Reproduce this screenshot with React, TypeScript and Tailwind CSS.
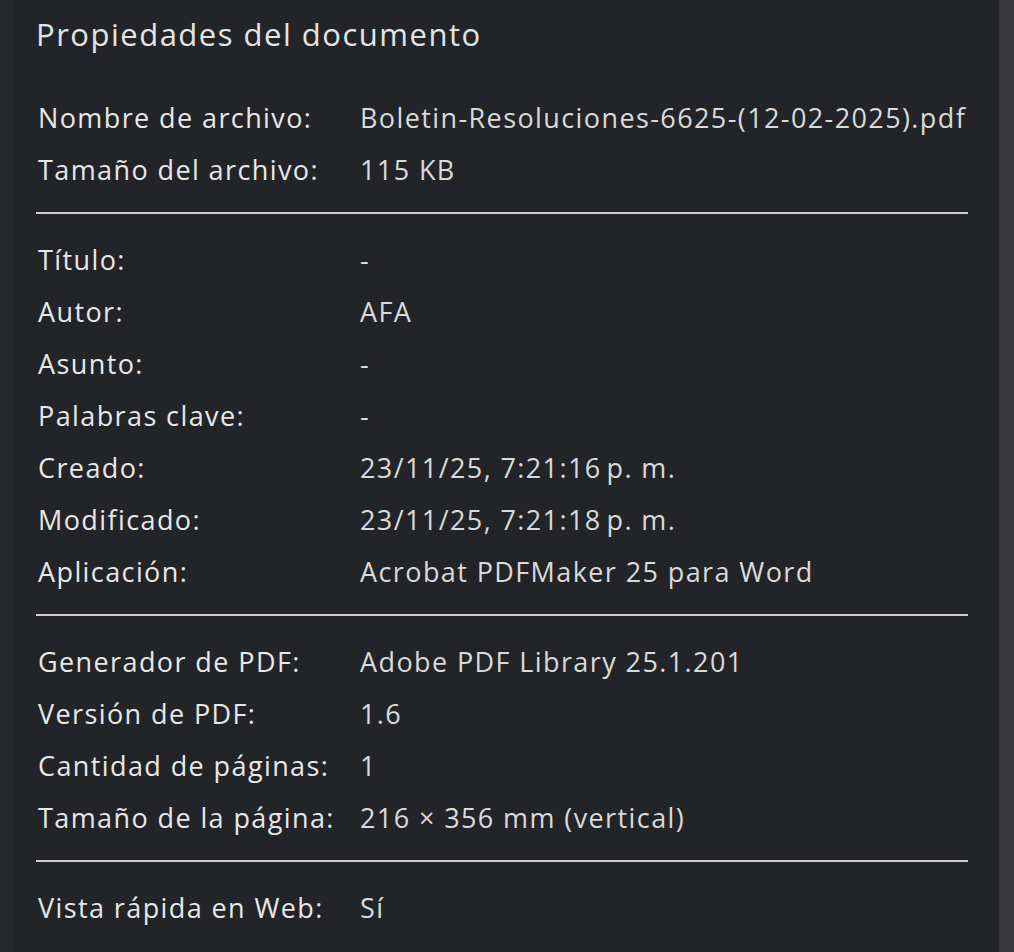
import React from "react";

type Row = { label: string; value: string };

const groups: Row[][] = [
   [
      { label: "Nombre de archivo:", value: "Boletin-Resoluciones-6625-(12-02-2025).pdf" },
      { label: "Tamaño del archivo:", value: "115 KB" },
   ],
   [
      { label: "Título:", value: "-" },
      { label: "Autor:", value: "AFA" },
      { label: "Asunto:", value: "-" },
      { label: "Palabras clave:", value: "-" },
      { label: "Creado:", value: "23/11/25, 7:21:16\u202Fp. m." },
      { label: "Modificado:", value: "23/11/25, 7:21:18\u202Fp. m." },
      { label: "Aplicación:", value: "Acrobat PDFMaker 25 para Word" },
   ],
   [
      { label: "Generador de PDF:", value: "Adobe PDF Library 25.1.201" },
      { label: "Versión de PDF:", value: "1.6" },
      { label: "Cantidad de páginas:", value: "1" },
      { label: "Tamaño de la página:", value: "216 × 356 mm (vertical)" },
   ],
   [{ label: "Vista rápida en Web:", value: "Sí" }],
];

export default function App() {
   return (
      <div
         className="flex w-[1014px] h-[952px] bg-[#232428] overflow-hidden"
         style={{ fontFamily: '"Open Sans", "Noto Sans", sans-serif' }}
      >
         <div className="w-[14px] shrink-0 bg-[#27282c]" />
         <div className="flex-1 min-w-0 flex flex-col pl-[22px] pr-[31px]">
            <h1 className="text-[31px] leading-[40px] tracking-[1.5px] text-[#e4e4e4] pt-[14px] pb-[38px]">
               Propiedades del documento
            </h1>
            {groups.map((rows, gi) => (
               <div
                  key={gi}
                  className={
                     gi < groups.length - 1
                        ? "flex flex-col border-b-2 border-[#cfcfcf] pb-[16px] mb-[20px]"
                        : "flex flex-col"
                  }
               >
                  {rows.map((r) => (
                     <div
                        key={r.label}
                        className="flex h-[52px] items-center text-[27px] tracking-[1.4px] font-medium"
                     >
                        <span className="w-[324px] shrink-0 pl-[2px] text-[#e8e8e8] whitespace-nowrap">
                           {r.label}
                        </span>
                        <span className="text-[#dadada] whitespace-nowrap">{r.value}</span>
                     </div>
                  ))}
               </div>
            ))}
         </div>
         <div className="w-[15px] shrink-0 bg-[#38383c]" />
      </div>
   );
}
